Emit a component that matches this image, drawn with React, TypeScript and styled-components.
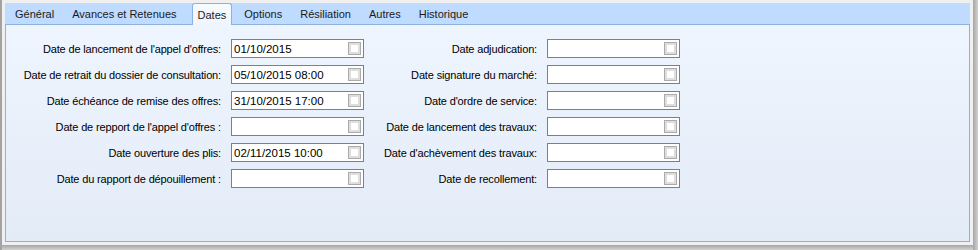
import React from 'react';
import styled, { createGlobalStyle } from 'styled-components';

const GlobalStyle = createGlobalStyle`
  html, body {
    margin: 0;
    padding: 0;
    background: #f0f0f0;
  }
  * {
    box-sizing: border-box;
  }
`;

const Window = styled.div`
  width: 978px;
  height: 250px;
  padding: 3px 8px 8px 3px;
  border-left: 2px solid #a3a3a3;
  background:
    linear-gradient(to right, #a6a6a6, #d2d2d2) right top / 5px 100% no-repeat,
    linear-gradient(to bottom, #a6a6a6, #d2d2d2) left bottom / 100% 5px no-repeat,
    #f0f0f0;
  font-family: 'Liberation Sans', Arial, sans-serif;
  color: #000;
`;

const TabControl = styled.div`
  width: 965px;
  height: 239px;
  display: flex;
  flex-direction: column;
`;

const TabStrip = styled.div`
  height: 21px;
  padding-left: 1px;
  display: flex;
  align-items: flex-end;
  background: #bfdbff;
  position: relative;
  z-index: 1;
`;

const Tab = styled.div<{ $active?: boolean }>`
  height: ${(p) => (p.$active ? '22px' : '21px')};
  padding: ${(p) => (p.$active ? '0 5px' : '0 9px')};
  margin: ${(p) => (p.$active ? '0 3px -1px 6px' : '0')};
  display: flex;
  align-items: center;
  font-size: 11px;
  white-space: nowrap;
  color: #1a1a1a;
  border: ${(p) => (p.$active ? '1px solid #8eb2e0' : 'none')};
  border-bottom: none;
  border-radius: ${(p) => (p.$active ? '3px 3px 0 0' : '0')};
  background: ${(p) => (p.$active ? 'linear-gradient(#f7fbff, #eef5fe)' : 'transparent')};
`;

const Panel = styled.div`
  flex: 1;
  border: 1px solid #8eb2e0;
  background: linear-gradient(#eef5fe, #e3ebf7);
  padding-top: 14px;
  display: flex;
`;

const Column = styled.div<{ $labelWidth: number }>`
  display: grid;
  grid-template-columns: ${(p) => p.$labelWidth}px 133px;
  column-gap: 10px;
  row-gap: 7px;
  align-content: start;
`;

const Label = styled.div`
  height: 19px;
  display: flex;
  align-items: center;
  justify-content: flex-end;
  font-size: 11px;
  letter-spacing: -0.15px;
  white-space: nowrap;
`;

const DateBox = styled.div`
  height: 19px;
  border: 1px solid #7f7f7f;
  background: #fff;
  display: flex;
  align-items: center;
  padding: 0 2px 0 2px;
  font-size: 11.5px;
  white-space: nowrap;
`;

const DateText = styled.span`
  flex: 1;
`;

const Check = styled.span`
  width: 13px;
  height: 13px;
  border: 1px solid #ababab;
  box-shadow: inset 0 0 0 2px #dedede;
  background: #fff;
  flex: none;
`;

type Field = { label: string; value?: string };

const leftFields: Field[] = [
  { label: "Date de lancement de l'appel d'offres:", value: '01/10/2015' },
  { label: 'Date de retrait du dossier de consultation:', value: '05/10/2015 08:00' },
  { label: 'Date échéance de remise des offres:', value: '31/10/2015 17:00' },
  { label: "Date de repport de l'appel d'offres :" },
  { label: 'Date ouverture des plis:', value: '02/11/2015 10:00' },
  { label: 'Date du rapport de dépouillement :' },
];

const rightFields: Field[] = [
  { label: 'Date adjudication:' },
  { label: 'Date signature du marché:' },
  { label: "Date d'ordre de service:" },
  { label: 'Date de lancement des travaux:' },
  { label: "Date d'achèvement des travaux:" },
  { label: 'Date de recollement:' },
];

const tabs = ['Général', 'Avances et Retenues', 'Dates', 'Options', 'Résiliation', 'Autres', 'Historique'];

function Fields({ fields, labelWidth }: { fields: Field[]; labelWidth: number }) {
  return (
    <Column $labelWidth={labelWidth}>
      {fields.map((f) => (
        <React.Fragment key={f.label}>
          <Label>{f.label}</Label>
          <DateBox>
            <DateText>{f.value ?? ''}</DateText>
            <Check />
          </DateBox>
        </React.Fragment>
      ))}
    </Column>
  );
}

export default function App() {
  return (
    <>
      <GlobalStyle />
      <Window>
        <TabControl>
          <TabStrip>
            {tabs.map((t) => (
              <Tab key={t} $active={t === 'Dates'}>
                {t}
              </Tab>
            ))}
          </TabStrip>
          <Panel>
            <Fields fields={leftFields} labelWidth={215} />
            <Fields fields={rightFields} labelWidth={173} />
          </Panel>
        </TabControl>
      </Window>
    </>
  );
}
